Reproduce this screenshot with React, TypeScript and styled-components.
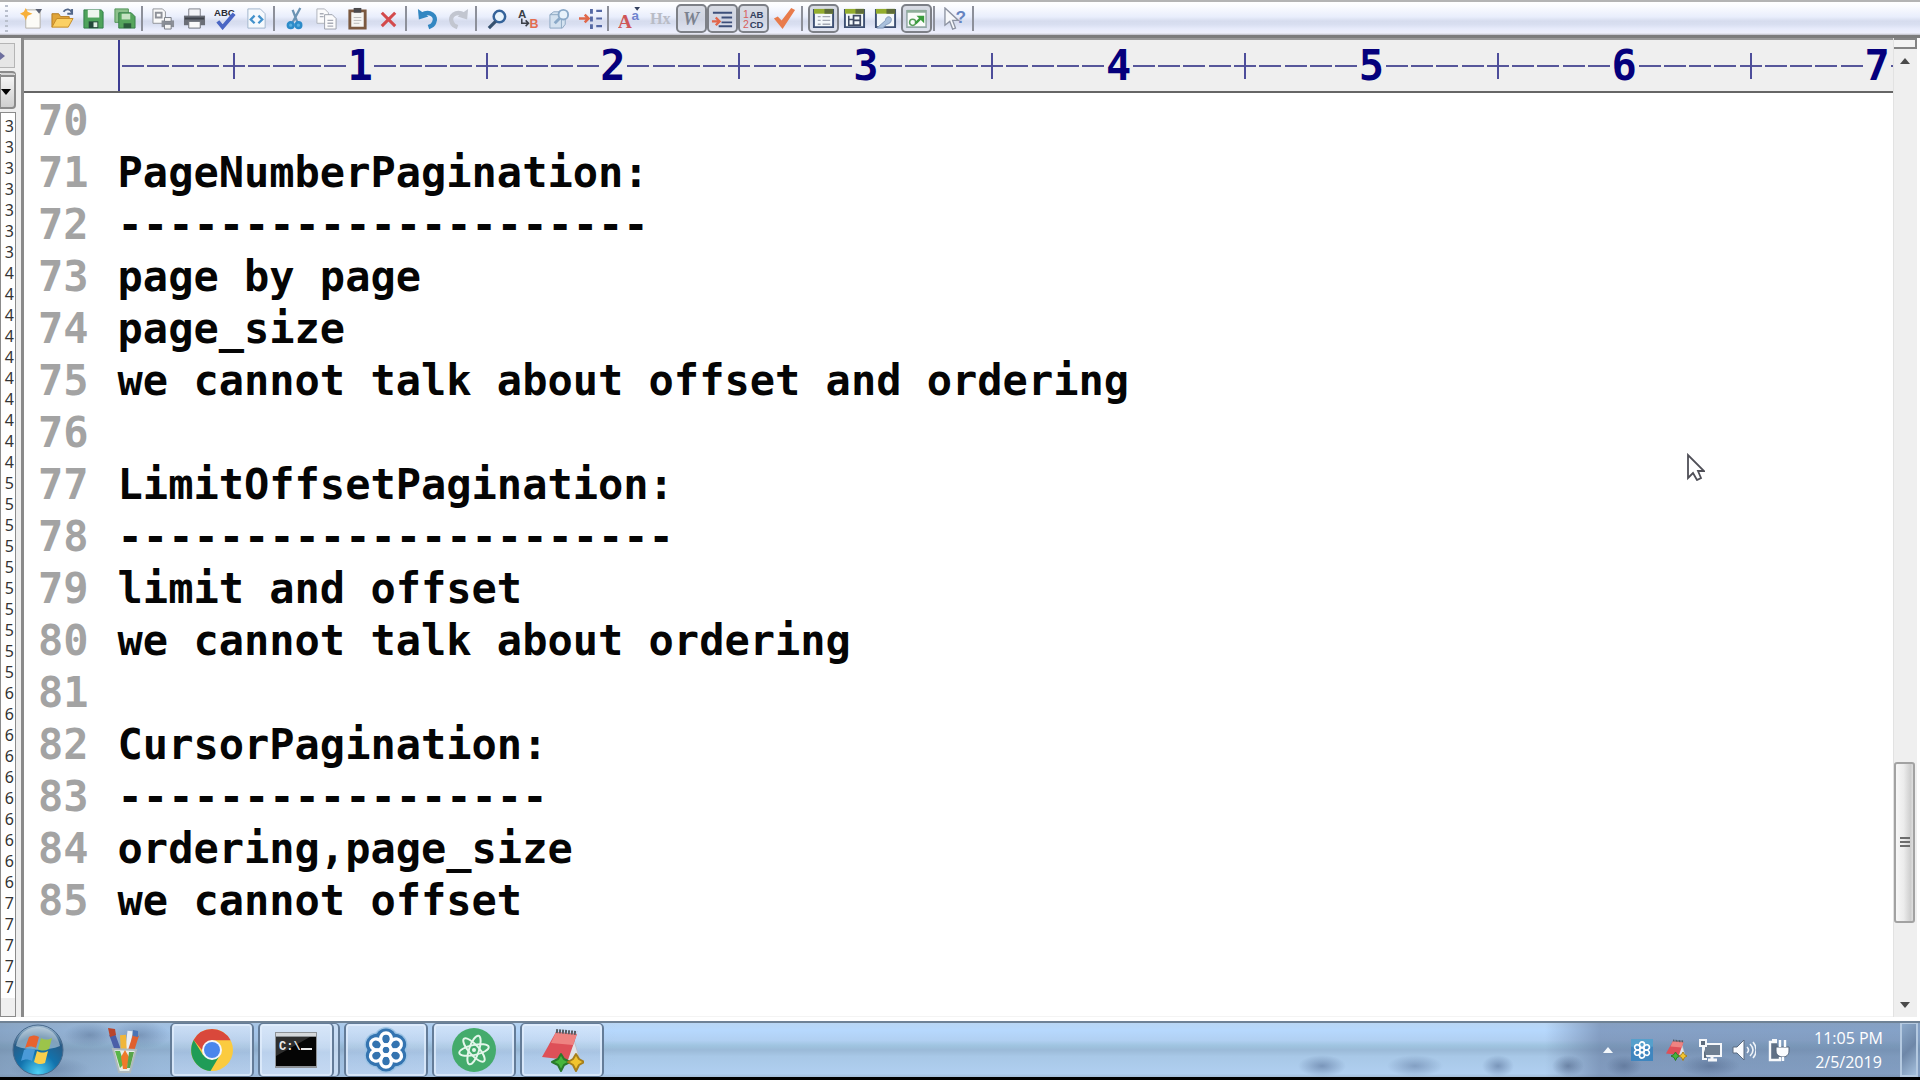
import React from "react";
import styled, { createGlobalStyle } from "styled-components";

const Global = createGlobalStyle`
  * { box-sizing: border-box; }
  html, body { margin: 0; padding: 0; }
  body { background: #fff; font-family: "Noto Sans", "Open Sans", sans-serif; }
  button { font: inherit; margin: 0; padding: 0; border: 0; background: none; }
  svg { display: block; flex: none; }
`;

const MONO = `"DejaVu Sans Mono", "Liberation Mono", monospace`;

const Page = styled.div`
  display: flex;
  flex-direction: column;
  height: 100vh;
  overflow: hidden;
`;

/* ---------- toolbar ---------- */

const ToolBar = styled.div`
  flex: none;
  display: flex;
  align-items: center;
  height: 38px;
  border-top: 2px solid #b4b4b4;
  border-bottom: 3px solid #7c7c7c;
  background: linear-gradient(#ffffff 0, #fbfcff 12%, #e9eefc 45%, #d6dcee 58%, #d9dff1 68%, #e8ecfc 82%, #eef0fc 94%, #bcbcc4 100%);
`;

const Grip = styled.span`
  width: 3px;
  height: 28px;
  margin: 0 8px 0 5px;
  background: repeating-linear-gradient(#b9bfcc 0 2px, transparent 2px 5px);
`;

const Tool = styled.button<{ $on?: boolean }>`
  display: grid;
  place-items: center;
  width: 31px;
  height: 29px;
  border: 2px solid ${(p) => (p.$on ? "#7d8087" : "transparent")};
  border-radius: 5px;
  background: ${(p) => (p.$on ? "linear-gradient(#d9dce4, #cfd4e2 55%, #e0e4f0)" : "none")};
`;

const Split = styled.span<{ $end?: boolean }>`
  width: 2px;
  height: 25px;
  margin: 0 ${(p) => (p.$end ? 0 : 5)}px 0 1px;
  background: #8d909a;
`;

/* ---------- middle ---------- */

const Middle = styled.div`
  flex: 1;
  min-height: 0;
  display: flex;
  padding-bottom: 4px;
`;

const Side = styled.aside`
  flex: none;
  display: flex;
  flex-direction: column;
  width: 24px;
  padding-right: 5px;
  border-right: 3px solid #8a8a8a;
  background: #efefef;
`;

const SideTab = styled.button`
  display: grid;
  place-items: center start;
  width: 15px;
  height: 25px;
  margin-top: 5px;
  border: 1px solid #b5b5b5;
  border-left: 0;
  background: #e6e6e6;
`;

const SideDrop = styled.button`
  display: grid;
  place-items: center start;
  width: 16px;
  height: 38px;
  margin-top: 3px;
  border: 2px solid #8b8b8b;
  border-left: 1px solid #8b8b8b;
  border-top: 6px double #8b8b8b;
  border-radius: 0 4px 4px 0;
  background: linear-gradient(#f4f4f4, #cfcfcf);
`;

const SideList = styled.ol`
  flex: none;
  width: 16px;
  margin: 3px 0 0;
  padding: 3px 1px 0 0;
  border: 1px solid #8b8b8b;
  border-bottom: 0;
  background: #fff;
  list-style: none;
  text-align: right;
  font-size: 16px;
  line-height: 21px;
  color: #333;
`;

const SideEnd = styled.div`
  flex: 1;
  width: 16px;
  border: 1px solid #8b8b8b;
  border-top: 0;
  background: #efefef;
`;

const Editor = styled.main`
  position: relative;
  flex: 1;
  min-width: 0;
  display: flex;
  flex-direction: column;
  border-bottom: 1px solid #f4f4f4;
  font-family: ${MONO};
  font-size: 42px;
`;

const Ruler = styled.div`
  flex: none;
  display: flex;
  height: 55px;
  padding-left: 94px;
  border-top: 2px solid #9a9a9a;
  border-bottom: 2px solid #666;
  background: #efefef;
  overflow: hidden;
`;

const RulerScale = styled.div`
  display: flex;
  align-items: center;
  border-left: 2px solid #3c3c92;
`;

const Cell = styled.span<{ $kind: "dash" | "tick" | "num" }>`
  flex: none;
  display: grid;
  place-items: center;
  width: 1ch;
  height: ${(p) => (p.$kind === "tick" ? 26 : 50)}px;
  line-height: 50px;
  font-weight: bold;
  color: #05007c;
  background:
    ${(p) => (p.$kind === "tick" ? "linear-gradient(#4d4d9a, #4d4d9a) center / 2px 100% no-repeat," : "")}
    ${(p) => (p.$kind === "num" ? "none" : "linear-gradient(#56569a, #56569a) center / 22px 2px no-repeat")};
`;

const Doc = styled.ol`
  margin: 0;
  padding: 2px 0 0 14px;
  list-style: none;
  font-weight: bold;
  line-height: 52px;
`;

const Line = styled.li`
  display: flex;
  gap: 29px;
  height: 52px;
  white-space: pre;
  color: #050505;
`;

const LineNo = styled.span`
  color: #a3a3a3;
`;

const Pointer = styled.svg`
  position: absolute;
  right: 188px;
  top: 415px;
`;

/* ---------- scroll bar ---------- */

const Scroll = styled.div`
  flex: none;
  display: flex;
  flex-direction: column;
  align-items: flex-start;
  width: 24px;
  margin-right: 3px;
  border-left: 1px solid #e2e2e2;
  background: #efefef;
`;

const SplitBox = styled.span`
  width: 23px;
  height: 11px;
  border: 2px solid #858585;
  border-left: 0;
  background: #f4f4f4;
`;

const Arrow = styled.button`
  display: grid;
  place-items: center;
  width: 22px;
  height: 24px;
`;

const Track = styled.div`
  flex: 1;
  display: flex;
  flex-direction: column;
`;

const TrackGap = styled.span<{ $grow: number }>`
  flex: ${(p) => p.$grow} 1 0;
`;

const Thumb = styled.button`
  display: grid;
  place-items: center;
  width: 21px;
  height: 161px;
  border: 2px solid #a2a2a2;
  border-radius: 3px;
  background: linear-gradient(90deg, #f7f7f7, #ececec 45%, #cfcfcf 85%, #dedede);
`;

/* ---------- task bar ---------- */

const TaskBar = styled.footer`
  flex: none;
  display: flex;
  align-items: stretch;
  height: 59px;
  border-top: 2px solid #6f8295;
  border-bottom: 3px solid #000;
  background:
    radial-gradient(ellipse 26px 12px at 90px 12px, rgba(70, 95, 130, 0.4), transparent),
    radial-gradient(ellipse 30px 14px at 140px 12px, rgba(70, 95, 130, 0.4), transparent),
    radial-gradient(ellipse 40px 12px at 50px 46px, rgba(80, 105, 140, 0.4), transparent),
    radial-gradient(ellipse 24px 11px at 1322px 43px, rgba(80, 105, 145, 0.55), transparent),
    radial-gradient(ellipse 28px 11px at 1415px 43px, rgba(80, 105, 145, 0.45), transparent),
    radial-gradient(ellipse 16px 11px at 1498px 43px, rgba(80, 105, 145, 0.55), transparent),
    radial-gradient(ellipse 16px 11px at 1568px 43px, rgba(60, 80, 115, 0.5), transparent),
    radial-gradient(ellipse 18px 11px at 1624px 43px, rgba(60, 80, 115, 0.4), transparent),
    radial-gradient(ellipse 30px 11px at 1710px 43px, rgba(60, 80, 115, 0.4), transparent),
    linear-gradient(90deg, rgba(90, 115, 145, 0.5), rgba(110, 140, 175, 0.3) 160px, transparent 620px, transparent calc(100% - 375px), rgba(84, 104, 142, 0.5) calc(100% - 320px), rgba(84, 108, 146, 0.5)),
    linear-gradient(#b9d6f3 0, #b6d8fd 14%, #b1d0f2 32%, #9fc4e0 42%, #9bbad8 50%, #a8c8e7 62%, #b0cff0 94%, #a3bdd8 100%);
`;

const Start = styled.button`
  display: grid;
  place-items: center;
  width: 75px;
`;

const Pinned = styled.button`
  display: grid;
  place-items: center;
  width: 95px;
  padding-left: 3px;
`;

const Apps = styled.nav`
  display: flex;
  gap: 4px;
`;

const AppButton = styled.button`
  display: grid;
  place-items: center;
  width: 84px;
  border: 2px solid #647c98;
  border-top-width: 1px;
  border-bottom-width: 1px;
  border-radius: 5px;
  box-shadow: inset 0 0 0 2px rgba(226, 238, 252, 0.75);
  background: linear-gradient(rgba(222, 234, 250, 0.7), rgba(200, 219, 243, 0.5) 45%, rgba(178, 203, 235, 0.5) 55%, rgba(196, 216, 242, 0.6));
`;

const Stack = styled.span`
  display: flex;
  padding-right: 4px;
  border: 2px solid #647c98;
  border-width: 1px 2px 1px 0;
  border-radius: 5px;
  background: rgba(214, 229, 248, 0.7);

  ${AppButton} {
    width: 76px;
    margin: -1px 0;
  }
`;

const Tray = styled.div`
  display: flex;
  align-items: center;
  margin-left: auto;
`;

const TrayButton = styled.button`
  display: grid;
  place-items: center;
  width: 34px;
  height: 40px;
`;

const Clock = styled.time`
  width: 103px;
  margin-left: 2px;
  text-align: center;
  font-family: "Open Sans", "Noto Sans", sans-serif;
  font-size: 16px;
  line-height: 24px;
  color: #fff;
`;

const ShowDesktop = styled.button`
  align-self: stretch;
  width: 18px;
  margin-right: 2px;
  border: 2px solid #b4c9e0;
  border-top-width: 1px;
  background: linear-gradient(135deg, #8ba8c9, #6e87a8 50%, #a4bfdc);
`;

/* ---------- drawings ---------- */

const Ico = ({ children, size = 24, box = 24 }: { children: React.ReactNode; size?: number; box?: number }) => (
  <svg width={size} height={size} viewBox={`0 0 ${box} ${box}`} fill="none" aria-hidden="true">
    {children}
  </svg>
);

const Disk = () => (
  <>
    <path d="M2 3h18l2 2v17H2z" fill="#4ea35c" stroke="#2f7d48" />
    <path d="M6 3h12v8H6z" fill="#eef6ee" />
    <path d="M7 15h10v7H7z" fill="#23483a" />
    <path d="M12 16h4v5h-4z" fill="#dfeee2" />
  </>
);

const Win = () => (
  <>
    <path d="M2 3h20v18H2z" fill="#f4f8fb" stroke="#3d4f73" strokeWidth="2" />
    <path d="M2 2h20v5H2z" fill="#93ad2e" />
    <path d="M13 2h9v5h-9z" fill="#5d6b3a" />
  </>
);

const icons: Record<string, React.ReactNode> = {
  New: (
    <>
      <path d="M6 3h15v19H6z" fill="#fcfbf6" stroke="#b3b0a8" />
      <path d="M16 2h7l-3 5z" fill="#5a6173" />
      <path d="M6 1l2 4 5 2-5 2-2 5-2-5-4-2 4-2z" fill="#f7b03a" />
    </>
  ),
  Open: (
    <>
      <path d="M1 21V7h7l2 3h9v3" fill="#e0a53a" stroke="#b57b20" />
      <path d="M1 21l5-9h17l-5 9z" fill="#fbd064" stroke="#c48a27" />
      <path d="M13 5c3-4 7-3 9 1M22 2v5h-5" stroke="#52678a" strokeWidth="2" />
    </>
  ),
  Save: <Disk />,
  "Save all": (
    <>
      <path d="M2 2h14v14H2z" fill="#8cc08c" stroke="#4f9558" />
      <path d="M6 6h13l4 4v12H6z" fill="#55a55d" stroke="#36804a" />
      <path d="M9 7h9v6H9z" fill="#c5e3c3" />
      <path d="M11 17h8v5h-8z" fill="#2a5c3c" />
    </>
  ),
  "Print preview": (
    <>
      <path d="M1 2h10l3 3v12H1z" fill="#fafafa" stroke="#8f9299" />
      <path d="M4 6h6v5H4z" stroke="#8f9299" strokeWidth="2" />
      <path d="M10 14h13v7H10z" fill="#8b8f97" />
      <path d="M13 11h7v4h-7zM13 18h7v5h-7z" fill="#f4f4f4" stroke="#777c85" />
    </>
  ),
  Print: (
    <>
      <path d="M6 2h12v8H6z" fill="#f3f4f7" stroke="#7c8089" />
      <path d="M1 9h22v10H1z" fill="#6a6e77" />
      <path d="M2 11h20v2H2z" fill="#3f434b" />
      <path d="M6 15h12v7H6z" fill="#fafafa" stroke="#6a6e77" />
    </>
  ),
  Spelling: (
    <>
      <text x="0" y="9" fontSize="10" fontWeight="bold" fontFamily="Liberation Sans, sans-serif" fill="#2b2d36">ABC</text>
      <path d="M4 15l5 6L21 7" stroke="#4a66c4" strokeWidth="4" />
    </>
  ),
  Source: (
    <>
      <path d="M3 2h13l5 5v15H3z" fill="#f5f9fd" stroke="#9fb4cc" />
      <path d="M10 9l-4 4 4 4M14 9l4 4-4 4" stroke="#4392cc" strokeWidth="2.4" />
    </>
  ),
  Cut: (
    <>
      <path d="M17 1L9 16M9 3l5 13" stroke="#6b93b4" strokeWidth="2.4" />
      <circle cx="7" cy="19" r="3" fill="#5bb0e0" stroke="#2c8bc9" strokeWidth="2.6" />
      <circle cx="15" cy="19" r="3" fill="#5bb0e0" stroke="#2c8bc9" strokeWidth="2.6" />
    </>
  ),
  Copy: (
    <>
      <path d="M2 2h8l4 4v11H2z" fill="#fbfbfc" stroke="#b0b3bb" />
      <path d="M10 8h8l4 4v11H10z" fill="#fbfbfc" stroke="#9ca0aa" />
      <path d="M5 7h4M5 10h4M13 14h6M13 17h6M13 20h6" stroke="#a9adb7" strokeWidth="1.4" />
    </>
  ),
  Paste: (
    <>
      <path d="M4 4h16v18H4z" fill="#f6f6f4" stroke="#7b5940" strokeWidth="3" />
      <path d="M8 1h8v5H8z" fill="#4b4a4d" />
      <path d="M8 11h8M8 14h8M8 17h6" stroke="#b9b9b9" />
    </>
  ),
  Delete: <path d="M5 6l14 14M19 6L5 20" stroke="#d34a4c" strokeWidth="3.2" />,
  Undo: (
    <>
      <path d="M6 8c9-5 16 2 13 8-1 3-3 4-6 5" stroke="#3387c2" strokeWidth="4.6" />
      <path d="M2 2l1 11 10-3z" fill="#3387c2" />
    </>
  ),
  Redo: (
    <>
      <path d="M18 8C9 3 2 10 5 16c1 3 3 4 6 5" stroke="#c2c6d0" strokeWidth="4.6" />
      <path d="M22 2l-1 11-10-3z" fill="#c2c6d0" />
    </>
  ),
  Find: (
    <>
      <circle cx="14" cy="10" r="6" fill="#e9f4fc" stroke="#35639a" strokeWidth="2.6" />
      <path d="M10 15l-7 7" stroke="#35506f" strokeWidth="3.4" />
    </>
  ),
  Replace: (
    <>
      <text x="1" y="11" fontSize="12" fontWeight="bold" fontFamily="Liberation Sans, sans-serif" fill="#3b3f48">A</text>
      <text x="13" y="22" fontSize="13" fontWeight="bold" fontFamily="Liberation Sans, sans-serif" fill="#e36d50">B</text>
      <path d="M5 12v5h7M9 14l3 3-3 3" stroke="#3b3f48" strokeWidth="1.6" />
    </>
  ),
  "Find in files": (
    <>
      <path d="M2 8l4-3h12v13l-3 4H2z" fill="#d4e2f0" stroke="#8da7c2" />
      <path d="M2 8h12v14" stroke="#8da7c2" />
      <circle cx="16" cy="8" r="5" fill="#e8f2fb" stroke="#8aa9c8" strokeWidth="2" />
      <path d="M12 12l-5 5" stroke="#8aa9c8" strokeWidth="3" />
    </>
  ),
  "Go to line": (
    <>
      <path d="M0 12h9M6 8l4 4-4 4" stroke="#e0684a" strokeWidth="2.6" />
      <path d="M13 2v5M13 10v5M13 18v5" stroke="#5468a4" strokeWidth="3" />
      <path d="M18 4h6M18 12h6M18 20h6" stroke="#5468a4" strokeWidth="2.2" />
    </>
  ),
  Font: (
    <>
      <text x="0" y="22" fontSize="20" fontWeight="bold" fontFamily="Liberation Serif, serif" fill="#cf5658">A</text>
      <text x="14" y="14" fontSize="14" fontWeight="bold" fontFamily="Liberation Sans, sans-serif" fill="#6f84cf">a</text>
      <path d="M17 0h6l-3 4z" fill="#33405e" />
    </>
  ),
  "Hex view": (
    <text x="1" y="18" fontSize="17" fontWeight="bold" fontFamily="Liberation Serif, serif" fill="#b9bcc6">Hx</text>
  ),
  "Word wrap": (
    <text x="3" y="19" fontSize="19" fontWeight="bold" fontStyle="italic" fontFamily="Liberation Serif, serif" fill="#7c828f">W</text>
  ),
  Indent: (
    <>
      <path d="M2 6h20M11 11h11M11 16h11M8 20h14" stroke="#3d4f7a" strokeWidth="2" />
      <path d="M1 15h7M5 11l4 4-4 4" stroke="#e2664b" strokeWidth="2.4" />
    </>
  ),
  "Line numbers": (
    <>
      <text x="1" y="11" fontSize="11" fontFamily="Liberation Sans, sans-serif" fill="#d9605c">1</text>
      <text x="1" y="22" fontSize="11" fontFamily="Liberation Sans, sans-serif" fill="#d9605c">2</text>
      <text x="8" y="11" fontSize="10" fontWeight="bold" fontFamily="Liberation Sans, sans-serif" fill="#33405e">AB</text>
      <text x="8" y="22" fontSize="10" fontWeight="bold" fontFamily="Liberation Sans, sans-serif" fill="#33405e">CD</text>
    </>
  ),
  Check: <path d="M1 12l4-2 4 4L19 1l4 2L10 23z" fill="#e87b4c" />,
  "Full screen": (
    <>
      <Win />
      <path d="M6 10h3M6 14h3M6 18h3M11 10h8M11 14h8M11 18h8" stroke="#a3a8b4" strokeWidth="1.4" />
    </>
  ),
  "File tree": (
    <>
      <Win />
      <path d="M6 9v10h5M6 13h5" stroke="#3f4a63" strokeWidth="1.6" />
      <path d="M11 9h7v10h-7zM11 14h7" stroke="#3f4a63" strokeWidth="1.8" />
    </>
  ),
  "Tool output": (
    <>
      <Win />
      <path d="M3 22l9-8c0-5 7-5 6 0s-7 3-8 8z" fill="#a9c0dc" stroke="#7f96b8" />
    </>
  ),
  Browser: (
    <>
      <path d="M2 4h20v17H2z" fill="#f9fcf9" stroke="#93a8a6" strokeWidth="1.6" />
      <path d="M2 3h20v3H2z" fill="#8fae9a" />
      <circle cx="8" cy="16" r="3.2" stroke="#58a05a" strokeWidth="1.6" />
      <path d="M11 17l6-6" stroke="#3a9d3c" strokeWidth="2.6" />
      <path d="M12 9h8v8z" fill="#3a9d3c" />
    </>
  ),
  Help: (
    <>
      <path d="M1 1v18l5-4 3 8 3-1-3-8h6z" fill="#f7f8fb" stroke="#8d93a2" strokeWidth="1.4" />
      <text x="12" y="17" fontSize="18" fontWeight="bold" fontFamily="Liberation Sans, sans-serif" fill="#6583c0">?</text>
    </>
  ),
};

const groups: string[][] = [
  ["New", "Open", "Save", "Save all"],
  ["Print preview", "Print", "Spelling", "Source"],
  ["Cut", "Copy", "Paste", "Delete"],
  ["Undo", "Redo"],
  ["Find", "Replace", "Find in files", "Go to line"],
  ["Font", "Hex view", "Word wrap", "Indent", "Line numbers", "Check"],
  ["Full screen", "File tree", "Tool output", "Browser"],
  ["Help"],
];
const pressed = new Set(["Word wrap", "Indent", "Line numbers", "Full screen", "Browser"]);

const petals = [0, 60, 120, 180, 240, 300];

const Petals = () => (
  <g stroke="#fff" strokeWidth="3.4">
    {petals.map((a) => (
      <ellipse key={a} cx="23" cy="12" rx="5.4" ry="6" transform={`rotate(${a} 23 23)`} />
    ))}
    <circle cx="23" cy="23" r="5" />
  </g>
);

const Meeting = () => (
  <Ico size={46} box={46}>
    <g fill="#9cc3e4">
      {petals.map((a) => (
        <circle key={a} cx="23" cy="12" r="12" transform={`rotate(${a} 23 23)`} />
      ))}
    </g>
    <g fill="#3474b0">
      {petals.map((a) => (
        <circle key={a} cx="23" cy="12" r="10.6" transform={`rotate(${a} 23 23)`} />
      ))}
      <circle cx="23" cy="23" r="12" />
    </g>
    <Petals />
  </Ico>
);

const MeetingSmall = () => (
  <Ico size={22} box={46}>
    <path d="M0 0h46v46H0z" fill="#3f86bf" />
    <path d="M0 0h46v16H0z" fill="#55a0cc" />
    <Petals />
  </Ico>
);

const NotePad = ({ size }: { size: number }) => (
  <Ico size={size} box={44}>
    <path d="M34 12l7 24-24-3z" fill="#dfe3e8" stroke="#b9c0c9" />
    <path d="M16 4l21 2-9 26-26-3z" fill="#de5058" />
    <path d="M16 4l21 2-4 11-22-2z" fill="#ee8381" />
    <path d="M16 3l21 2" stroke="#555b63" strokeWidth="4" strokeDasharray="2 1" />
    <path d="M21 26l3 5 6 3-6 3-3 6-3-6-6-3 6-3z" fill="#46b53c" stroke="#2a7a2b" strokeWidth="2" strokeLinejoin="round" />
    <path d="M36 26l3 5 5 3-5 3-3 6-3-6-5-3 5-3z" fill="#f2c42f" stroke="#a67f1c" strokeWidth="2" strokeLinejoin="round" />
  </Ico>
);

const Atom = () => (
  <Ico size={46} box={46}>
    <circle cx="23" cy="23" r="22" fill="#44ab6c" />
    <g stroke="#e4f6ea" strokeWidth="2">
      <ellipse cx="23" cy="23" rx="15" ry="5" transform="rotate(-12 23 23)" />
      <ellipse cx="23" cy="23" rx="15" ry="5" transform="rotate(48 23 23)" />
      <ellipse cx="23" cy="23" rx="15" ry="5" transform="rotate(108 23 23)" />
    </g>
    <circle cx="23" cy="23" r="2" fill="#e4f6ea" />
  </Ico>
);

const Chrome = () => (
  <Ico size={44} box={44}>
    <circle cx="22" cy="22" r="21" fill="#fbcb3f" />
    <path d="M22 1A21 21 0 0 1 40.6 12.3H22L12 22 3.6 12A21 21 0 0 1 22 1z" fill="#d9483b" />
    <path d="M3.7 12A21 21 0 0 0 20.5 43L30 27l-8 4.500L13 27z" fill="#1f9c57" />
    <circle cx="22" cy="22" r="10" fill="#f4f6fa" />
    <circle cx="22" cy="22" r="8" fill="#4a86ec" />
  </Ico>
);

const Cmd = () => (
  <svg width="42" height="36" viewBox="0 0 42 36" aria-hidden="true">
    <path d="M0 0h42v36H0z" fill="#8e9297" />
    <path d="M1 1h40v3H1z" fill="#d5d8db" />
    <path d="M1 5h40v29H1z" fill="#050505" />
    <path d="M1 5h34L1 24z" fill="#2e2e2e" />
    <text x="4" y="18" fontSize="12" fontWeight="bold" fontFamily="Liberation Mono, monospace" fill="#e8e8e8">C:\</text>
    <path d="M26 17h11" stroke="#e8e8e8" strokeWidth="2" />
  </svg>
);

const Orb = () => (
  <Ico size={52} box={52}>
    <defs>
      <radialGradient id="orb" cx="0.5" cy="0.95" r="0.95">
        <stop offset="0" stopColor="#4fd0f5" />
        <stop offset="0.4" stopColor="#1273ad" />
        <stop offset="0.75" stopColor="#285b86" />
        <stop offset="1" stopColor="#a6bfd4" />
      </radialGradient>
    </defs>
    <circle cx="26" cy="26" r="25" fill="url(#orb)" stroke="#47698c" />
    <path d="M4 22C7 7 18 3 26 3s19 4 22 19c-12 5-32 5-44 0z" fill="#dbe7f0" opacity="0.5" />
    <path d="M17 13c4-2 7-2 10 0l-3 11c-4-2-7-2-11 0z" fill="#e8622f" />
    <path d="M29 14c4 2 7 2 11 0l-3 11c-4 2-8 2-11 0z" fill="#9cc44a" />
    <path d="M12 26c4-2 7-2 11 0l-3 11c-4-2-7-2-11 0z" fill="#4a9ad8" />
    <path d="M25 27c4 2 7 2 11 0l-3 12c-4 2-8 1-11-1z" fill="#f8cf4d" />
  </Ico>
);

const Pencils = () => (
  <svg width="32" height="46" viewBox="0 0 32 46" fill="none" aria-hidden="true">
    <path d="M4 7l8 22" stroke="#4a5fa8" strokeWidth="6" />
    <path d="M0 1l7 1 1 6-6 2z" fill="#b9452c" />
    <path d="M22 4l-3 26" stroke="#e9edf2" strokeWidth="5" />
    <path d="M15 8l1 22" stroke="#f0b63a" strokeWidth="6" />
    <path d="M28 8l-7 22" stroke="#e0602f" strokeWidth="6" />
    <path d="M25 3l5 1v6l-5-1z" fill="#4b74b5" />
    <path d="M5 22l23 1-6 22H11z" fill="#e6ede9" stroke="#aeb9bd" strokeWidth="2" />
    <path d="M7 24h5l4 13-4 4z" fill="#59b548" />
    <path d="M13 30l4-7 4 7-2 12h-4z" fill="#ef7a2a" />
    <path d="M21 25h5l-4 16h-3z" fill="#58a44a" />
  </svg>
);

const Network = () => (
  <Ico>
    <path d="M6 6h17v12H6z" fill="#6f7f92" stroke="#f5f7fa" strokeWidth="2" />
    <path d="M10 22h9M14 18v4" stroke="#f5f7fa" strokeWidth="3" />
    <path d="M2 2h6v6H2zM5 8v13h4" stroke="#f5f7fa" strokeWidth="2" fill="#5d6b7c" />
  </Ico>
);

const Volume = () => (
  <Ico>
    <path d="M1 9h4l7-7v20l-7-7H1z" fill="#fafcff" stroke="#5a6b80" />
    <path d="M15 9c2 2 2 4 0 6M18 6c4 4 4 8 0 12M21 4c4 5 4 11 0 16" stroke="#eef3f9" strokeWidth="1.6" />
  </Ico>
);

const Plug = () => (
  <Ico>
    <path d="M11 4H4v18h10v-3" stroke="#f7f9fc" strokeWidth="2.4" fill="#5f7086" />
    <path d="M6 2h5" stroke="#f7f9fc" strokeWidth="2" />
    <path d="M10 9h13v4c0 4-3 6-6 6s-7-2-7-6z" fill="#fafcff" stroke="#54647a" />
    <path d="M14 2v7M19 2v7M17 19v4" stroke="#fafcff" strokeWidth="2.4" />
  </Ico>
);

const Triangle = ({ down, color = "#4a4a4a" }: { down?: boolean; color?: string }) => (
  <svg width="10" height="6" viewBox="0 0 10 6" aria-hidden="true">
    <path d={down ? "M0 0h10L5 6z" : "M0 6h10L5 0z"} fill={color} />
  </svg>
);

/* ---------- content ---------- */

const firstLine = 70;
const lines = [
  "",
  "PageNumberPagination:",
  "---------------------",
  "page by page",
  "page_size",
  "we cannot talk about offset and ordering",
  "",
  "LimitOffsetPagination:",
  "----------------------",
  "limit and offset",
  "we cannot talk about ordering",
  "",
  "CursorPagination:",
  "-----------------",
  "ordering,page_size",
  "we cannot offset",
];

const sideDigits = Array.from({ length: 42 }, (_, i) => Math.floor((i + 33) / 10));
const rulerCells = Array.from({ length: 71 }, (_, i) => i);

export default function App() {
  return (
    <Page>
      <Global />
      <ToolBar role="toolbar" aria-label="Standard">
        <Grip />
        {groups.map((names, g) => (
          <React.Fragment key={g}>
            {names.map((n) => (
              <Tool key={n} type="button" aria-label={n} $on={pressed.has(n)}>
                <Ico size={23}>{icons[n]}</Ico>
              </Tool>
            ))}
            <Split $end={g === groups.length - 1} />
          </React.Fragment>
        ))}
      </ToolBar>

      <Middle>
        <Side>
          <SideTab type="button" aria-label="Next tab">
            <svg width="5" height="8" viewBox="0 0 5 8" aria-hidden="true">
              <path d="M0 0l5 4-5 4z" fill="#6d6f9e" />
            </svg>
          </SideTab>
          <SideDrop type="button" aria-label="Choose drive">
            <Triangle down color="#000" />
          </SideDrop>
          <SideList>
            {sideDigits.map((d, i) => (
              <li key={i}>{d}</li>
            ))}
          </SideList>
          <SideEnd />
        </Side>

        <Editor>
          <Ruler>
            <RulerScale>
              {rulerCells.map((i) => {
                const kind = i % 10 === 4 ? "tick" : i % 10 === 9 ? "num" : "dash";
                return (
                  <Cell key={i} $kind={kind}>
                    {kind === "num" ? (i + 1) / 10 : null}
                  </Cell>
                );
              })}
            </RulerScale>
          </Ruler>
          <Doc>
            {lines.map((text, i) => (
              <Line key={i}>
                <LineNo>{firstLine + i}</LineNo>
                <span>{text}</span>
              </Line>
            ))}
          </Doc>
          <Pointer width="18" height="28" viewBox="0 0 18 28" aria-hidden="true">
            <path d="M1 2v23l5-5 4 7 4-2-3-7h6z" fill="#fff" stroke="#4f4f57" strokeWidth="1.8" />
          </Pointer>
        </Editor>

        <Scroll>
          <SplitBox />
          <Arrow type="button" aria-label="Scroll up">
            <Triangle />
          </Arrow>
          <Track>
            <TrackGap $grow={689} />
            <Thumb type="button" aria-label="Scroll position">
              <svg width="10" height="11" viewBox="0 0 10 11" aria-hidden="true">
                <path d="M0 1h10M0 5h10M0 9h10" stroke="#6c6c6c" strokeWidth="2" />
              </svg>
            </Thumb>
            <TrackGap $grow={70} />
          </Track>
          <Arrow type="button" aria-label="Scroll down">
            <Triangle down />
          </Arrow>
        </Scroll>
      </Middle>

      <TaskBar>
        <Start type="button" aria-label="Start">
          <Orb />
        </Start>
        <Pinned type="button" aria-label="Drawing tool">
          <Pencils />
        </Pinned>
        <Apps>
          <AppButton type="button" aria-label="Chrome">
            <Chrome />
          </AppButton>
          <Stack>
            <AppButton type="button" aria-label="Command prompt">
              <Cmd />
            </AppButton>
          </Stack>
          <AppButton type="button" aria-label="Meeting">
            <Meeting />
          </AppButton>
          <AppButton type="button" aria-label="Atom">
            <Atom />
          </AppButton>
          <AppButton type="button" aria-label="Text editor">
            <NotePad size={44} />
          </AppButton>
        </Apps>
        <Tray>
          <TrayButton type="button" aria-label="Show hidden icons">
            <Triangle color="#f4f8fc" />
          </TrayButton>
          <TrayButton type="button" aria-label="Meeting status">
            <MeetingSmall />
          </TrayButton>
          <TrayButton type="button" aria-label="Text editor status">
            <NotePad size={22} />
          </TrayButton>
          <TrayButton type="button" aria-label="Network">
            <Network />
          </TrayButton>
          <TrayButton type="button" aria-label="Volume">
            <Volume />
          </TrayButton>
          <TrayButton type="button" aria-label="Power">
            <Plug />
          </TrayButton>
          <Clock>
            11:05 PM
            <br />
            2/5/2019
          </Clock>
          <ShowDesktop type="button" aria-label="Show desktop" />
        </Tray>
      </TaskBar>
    </Page>
  );
}
